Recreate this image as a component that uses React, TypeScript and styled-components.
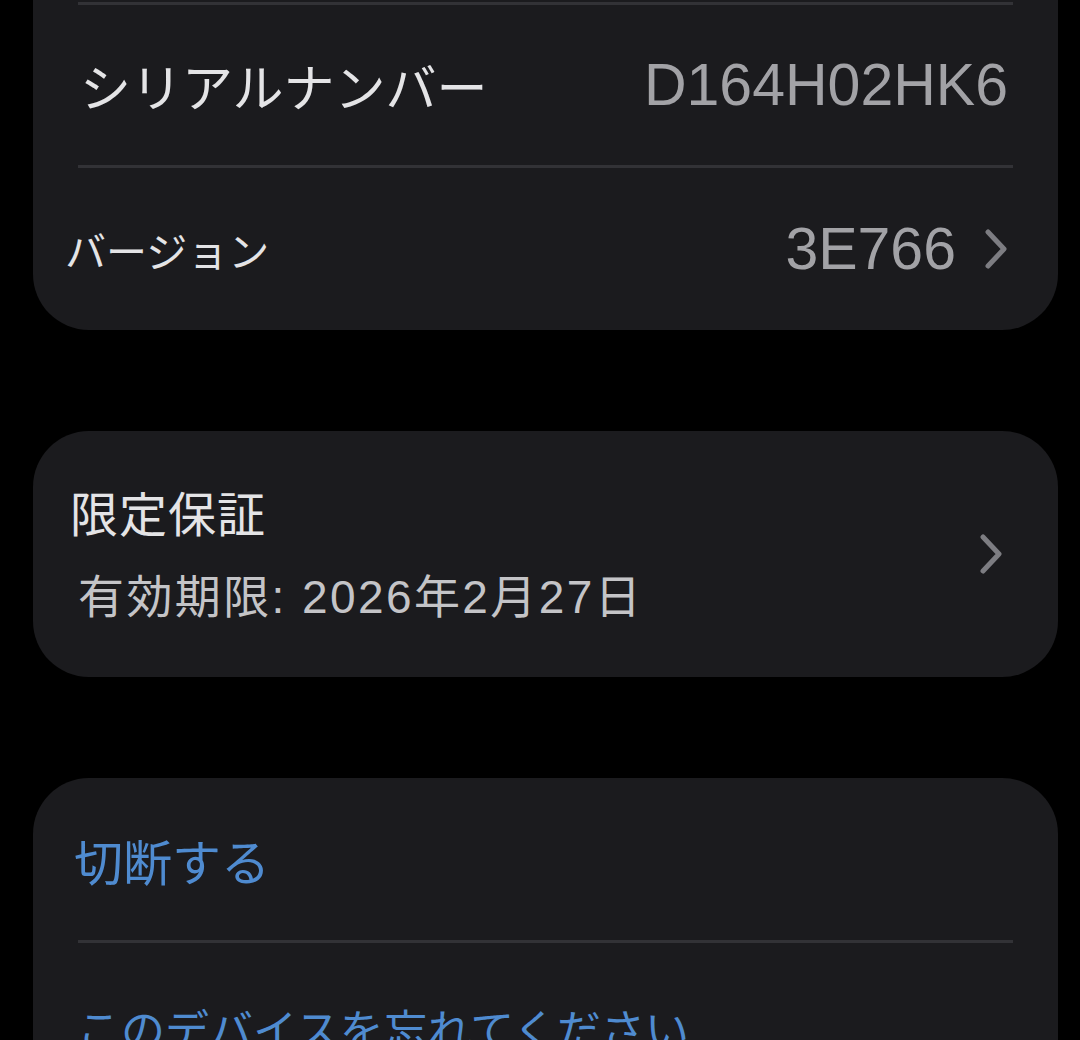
import React from "react";
import styled, { createGlobalStyle } from "styled-components";

const Global = createGlobalStyle`
  html, body {
    margin: 0;
    padding: 0;
    background: #000;
  }
  body {
    font-family: "Liberation Sans", "Noto Sans CJK JP", sans-serif;
    -webkit-font-smoothing: antialiased;
  }
`;

const Page = styled.div`
  width: 1080px;
  height: 1040px;
  overflow: hidden;
  background: #000;
  display: flex;
  flex-direction: column;
  gap: 101px;
  padding: 0 22px 0 33px;
  box-sizing: border-box;
`;

const Card = styled.section<{ $cutTop?: boolean }>`
  background: #1b1b1e;
  border-radius: ${(p) => (p.$cutTop ? "0 0 56px 56px" : "56px")};
  padding-top: ${(p) => (p.$cutTop ? "2px" : "0")};
  display: flex;
  flex-direction: column;
  flex-shrink: 0;
`;

const Separator = styled.div`
  height: 3px;
  margin: 0 45px;
  background: #323236;
`;

const Row = styled.div<{ $h: number }>`
  height: ${(p) => p.$h}px;
  display: flex;
  align-items: center;
  justify-content: space-between;
  padding: 0 50px 0 47px;
`;

const Label = styled.span<{ $size: number; $shift?: number; $spacing?: number }>`
  font-family: "Noto Sans CJK JP", sans-serif;
  font-size: ${(p) => p.$size}px;
  color: #e4e4e6;
  margin-left: ${(p) => p.$shift ?? 0}px;
  letter-spacing: ${(p) => p.$spacing ?? 0}px;
`;

const ActionLabel = styled.span<{ $size: number; $shift?: number }>`
  font-family: "Noto Sans CJK JP", sans-serif;
  font-size: ${(p) => p.$size}px;
  color: #4f8bd0;
  margin-left: ${(p) => p.$shift ?? 0}px;
`;

const Value = styled.span`
  display: flex;
  align-items: center;
  gap: 28px;
  font-family: "Liberation Sans", sans-serif;
  font-size: 59px;
  color: #a2a2a6;
`;

const WarrantyBody = styled.div`
  display: flex;
  align-items: center;
  justify-content: space-between;
  padding: 51px 55px 52px 37px;
`;

const WarrantyText = styled.div`
  display: flex;
  flex-direction: column;
  gap: 30px;
`;

const Title = styled.span`
  font-family: "Noto Sans CJK JP", sans-serif;
  font-size: 48px;
  line-height: 58px;
  letter-spacing: 1px;
  color: #e4e4e6;
`;

const Subtitle = styled.span`
  font-family: "Liberation Sans", "Noto Sans CJK JP", sans-serif;
  font-size: 46px;
  line-height: 55px;
  letter-spacing: 2.4px;
  color: #c4c4c7;
  margin-left: 8px;
`;

const Chevron = () => (
  <svg width="24" height="40" viewBox="0 0 24 40" fill="none">
    <path
      d="M4 3 L20 20 L4 37"
      stroke="#7d7d82"
      strokeWidth="5"
      strokeLinecap="round"
      strokeLinejoin="round"
    />
  </svg>
);

export default function App() {
  return (
    <>
      <Global />
      <Page>
        <Card $cutTop>
          <Separator />
          <Row $h={160}>
            <Label $size={51}>シリアルナンバー</Label>
            <Value>D164H02HK6</Value>
          </Row>
          <Separator />
          <Row $h={162}>
            <Label $size={41} $shift={-15}>
              バージョン
            </Label>
            <Value>
              3E766
              <Chevron />
            </Value>
          </Row>
        </Card>

        <Card>
          <WarrantyBody>
            <WarrantyText>
              <Title>限定保証</Title>
              <Subtitle>有効期限: 2026年2月27日</Subtitle>
            </WarrantyText>
            <Chevron />
          </WarrantyBody>
        </Card>

        <Card>
          <Row $h={162}>
            <ActionLabel $size={49} $shift={-6}>
              切断する
            </ActionLabel>
          </Row>
          <Separator />
          <Row $h={170}>
            <ActionLabel $size={44} $shift={-3}>
              このデバイスを忘れてください
            </ActionLabel>
          </Row>
        </Card>
      </Page>
    </>
  );
}
